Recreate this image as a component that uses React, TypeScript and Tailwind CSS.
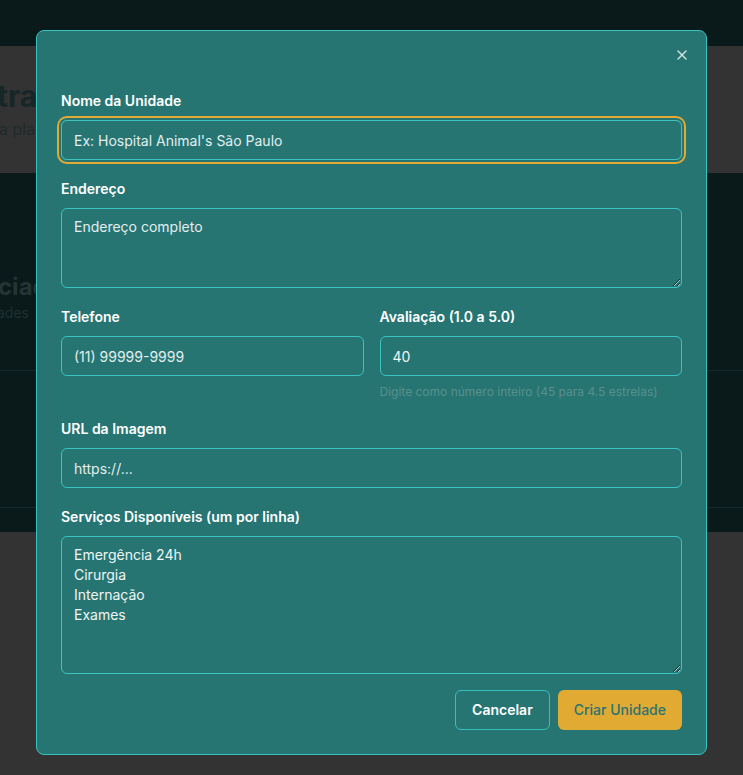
import React from "react";
import { X } from "lucide-react";

const labelCls = "block text-sm leading-5 font-semibold text-white mb-[9px]";
const fieldCls =
  "w-full rounded-md border border-[#3cc3c1] bg-transparent px-3 text-sm text-[#eef6f5] placeholder:text-[#e3eeed] outline-none";

const Backdrop = () => {
  return (
    <div className="min-h-screen bg-[#333333] font-['Inter',sans-serif]">
      <div className="h-[46px] bg-[#0a1919]"></div>
      <div className="h-[127px] pt-[32px] w-[36px] overflow-hidden">
        <h1 className="text-[30px] leading-9 font-bold text-[#172626] -ml-[3px] whitespace-nowrap">tração</h1>
        <p className="mt-[3px] text-base text-[#1f2a2a] -ml-[1px] whitespace-nowrap">a plataforma</p>
      </div>
      <div className="bg-[#0a1a1a]">
        <div className="h-[197px] pt-[98px] w-[36px] overflow-hidden">
          <h2 className="text-2xl font-bold text-[#243434] -ml-[2px] whitespace-nowrap">ciadas</h2>
          <p className="text-sm text-[#1f3030] -ml-[3px] whitespace-nowrap">ades</p>
        </div>
        <div className="h-[137px] border-t border-[#13292a]"></div>
        <div className="h-[25px] border-t border-[#13292a]"></div>
      </div>
    </div>
  );
};

const UnitDialog = () => {
  return (
    <div className="fixed inset-0 flex justify-center items-start pt-[30px] font-['Inter',sans-serif]">
      <div className="relative w-[671px] rounded-lg border border-[#38c3c1] bg-[#267573] px-6 pt-[60px] pb-6">
        <button className="absolute right-4 top-4 text-[#cfe3e2]">
          <X size={16} strokeWidth={2} />
        </button>

        <form className="flex flex-col gap-[19px]">
          <div>
            <label className={labelCls}>Nome da Unidade</label>
            <input
              className={`${fieldCls} h-10 ring-2 ring-[#e0aa33] ring-offset-2 ring-offset-[#267573]`}
              placeholder="Ex: Hospital Animal's São Paulo"
            />
          </div>

          <div>
            <label className={labelCls}>Endereço</label>
            <textarea className={`${fieldCls} h-20 py-2 block`} placeholder="Endereço completo" />
          </div>

          <div className="grid grid-cols-2 gap-4">
            <div>
              <label className={labelCls}>Telefone</label>
              <input className={`${fieldCls} h-10`} placeholder="(11) 99999-9999" />
            </div>
            <div>
              <label className={labelCls}>Avaliação (1.0 a 5.0)</label>
              <input className={`${fieldCls} h-10`} defaultValue="40" />
              <p className="mt-2 text-xs leading-4 text-[#5b8f8d]">
                Digite como número inteiro (45 para 4.5 estrelas)
              </p>
            </div>
          </div>

          <div>
            <label className={labelCls}>URL da Imagem</label>
            <input className={`${fieldCls} h-10`} placeholder="https://..." />
          </div>

          <div>
            <label className={labelCls}>Serviços Disponíveis (um por linha)</label>
            <textarea
              className={`${fieldCls} h-[138px] py-2 block`}
              defaultValue={"Emergência 24h\nCirurgia\nInternação\nExames"}
            />
          </div>
        </form>

        <div className="mt-4 flex justify-end gap-2">
          <button className="h-10 rounded-md border border-[#38bfbd] px-4 text-sm font-semibold text-white">
            Cancelar
          </button>
          <button className="h-10 rounded-md bg-[#e0aa33] px-4 text-sm font-medium text-[#2b7371]">
            Criar Unidade
          </button>
        </div>
      </div>
    </div>
  );
};

export default function App() {
  return (
    <div className="relative">
      <Backdrop />
      <UnitDialog />
    </div>
  );
}
